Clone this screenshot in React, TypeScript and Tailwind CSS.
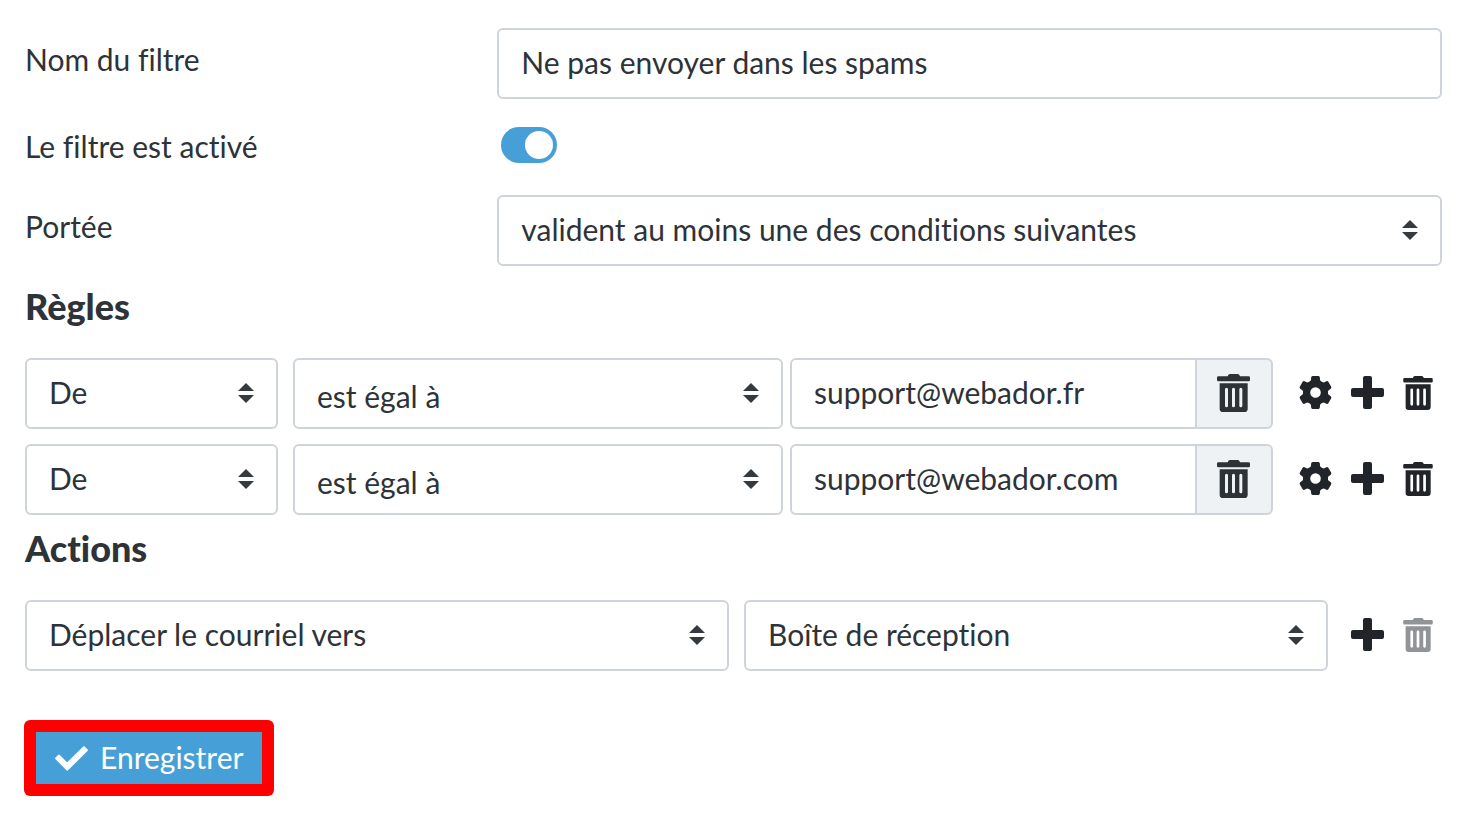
import { useState } from 'react';
import type { ReactNode, SelectHTMLAttributes } from 'react';
import clsx from 'clsx';

const rules = [
  { id: 1, value: 'support@webador.fr' },
  { id: 2, value: 'support@webador.com' },
];

const fieldClass =
  'h-[71px] w-full min-w-0 appearance-none border-2 border-[#ced4da] bg-white px-[22px] pb-[3px] outline-none focus:border-[#469fd6]';

function TrashIcon({ className }: { className?: string }) {
  return (
    <svg viewBox="0 0 99 114" fill="currentColor" className={className} aria-hidden="true">
      <path d="M4 7h28q2-7 7-7h23q5 0 7 7h26q4 0 4 4v7q0 4-4 4H4q-4 0-4-4v-7q0-4 4-4z" />
      <path
        fillRule="evenodd"
        d="M8 28h84v76q0 10-10 10H18q-10 0-10-10zM24 46v49a4.500 4.500 0 0 0 9 0V46a4.500 4.500 0 0 0-9 0zM45 46v49a4.500 4.500 0 0 0 9 0V46a4.500 4.500 0 0 0-9 0zM67 46v49a4.500 4.500 0 0 0 9 0V46a4.500 4.500 0 0 0-9 0z"
      />
    </svg>
  );
}

function GearIcon() {
  return (
    <svg viewBox="-50 -50 100 100" fill="currentColor" className="size-[33px]" aria-hidden="true">
      <circle r="27" fill="none" stroke="currentColor" strokeWidth="22" />
      {[0, 60, 120, 180, 240, 300].map((angle) => (
        <path
          key={angle}
          transform={`rotate(${angle})`}
          d="M-19-30l5-7 1-9q1-4 5-4H8q4 0 5 4l1 9 5 7z"
        />
      ))}
    </svg>
  );
}

function PlusIcon() {
  return (
    <svg viewBox="0 0 99 99" fill="currentColor" className="size-[33px]" aria-hidden="true">
      <rect x="36" width="27" height="99" rx="6" />
      <rect y="36" width="99" height="27" rx="6" />
    </svg>
  );
}

function CheckIcon() {
  return (
    <svg viewBox="0 0 100 75" className="h-[25px] w-[33px]" aria-hidden="true">
      <path
        d="M4 37l8-8 25 25 51-50 8 8-59 59z"
        fill="currentColor"
        stroke="currentColor"
        strokeWidth="7"
        strokeLinejoin="round"
      />
    </svg>
  );
}

type SelectProps = SelectHTMLAttributes<HTMLSelectElement> & {
  options: string[];
  wrapperClassName?: string;
};

function Select({ options, wrapperClassName, className, ...props }: SelectProps) {
  return (
    <div className={clsx('relative min-w-0', wrapperClassName)}>
      <select className={clsx(fieldClass, 'rounded-md pr-14', className)} {...props}>
        {options.map((option) => (
          <option key={option}>{option}</option>
        ))}
      </select>
      <svg
        viewBox="0 0 16 20"
        fill="#343a40"
        className="pointer-events-none absolute top-0 right-6 bottom-0.5 my-auto h-5 w-4"
        aria-hidden="true"
      >
        <path d="M8 0l8 8H0zM0 12h16l-8 8z" />
      </svg>
    </div>
  );
}

function IconButton({
  label,
  disabled,
  children,
}: {
  label: string;
  disabled?: boolean;
  children: ReactNode;
}) {
  return (
    <button
      type="button"
      aria-label={label}
      disabled={disabled}
      className="shrink-0 cursor-pointer text-[#212529] disabled:cursor-default disabled:text-[#909497]"
    >
      {children}
    </button>
  );
}

function RuleRow({ value }: { value: string }) {
  return (
    <div className="flex items-center">
      <Select aria-label="Champ" options={['De']} wrapperClassName="flex-[253_1_0px]" />
      <Select
        aria-label="Condition"
        options={['est égal à']}
        wrapperClassName="ml-[15px] flex-[490_1_0px]"
        className="pt-2"
      />
      <div className="ml-[7px] flex min-w-0 flex-[483_1_0px]">
        <input
          type="text"
          aria-label="Valeur"
          defaultValue={value}
          className={clsx(fieldClass, 'flex-1 rounded-l-md border-r-0')}
        />
        <button
          type="button"
          aria-label="Effacer la valeur"
          className="flex w-[78px] shrink-0 cursor-pointer items-center justify-center rounded-r-md border-2 border-[#ced4da] bg-[#eef2f4] pr-0.5 pb-0.5 text-[#2d3236]"
        >
          <TrashIcon className="h-[38px] w-[33px]" />
        </button>
      </div>
      <div className="ml-[26px] flex items-center gap-[19px] pr-[9px] pb-0.5">
        <IconButton label="Options">
          <GearIcon />
        </IconButton>
        <IconButton label="Ajouter une règle">
          <PlusIcon />
        </IconButton>
        <IconButton label="Supprimer la règle">
          <TrashIcon className="h-[34px] w-[30px]" />
        </IconButton>
      </div>
    </div>
  );
}

export default function App() {
  const [enabled, setEnabled] = useState(true);

  return (
    <form
      onSubmit={(e) => e.preventDefault()}
      className="min-h-screen bg-white pt-7 pr-[30px] pb-6 pl-[25px] font-[Lato,sans-serif] text-[30px] leading-9 text-[#2d3338] [font-variant-ligatures:none]"
    >
      <div className="grid grid-cols-3">
        <label htmlFor="filter-name" className="pt-[13px]">
          Nom du filtre
        </label>
        <input
          id="filter-name"
          type="text"
          defaultValue="Ne pas envoyer dans les spams"
          className={clsx(fieldClass, 'col-span-2 rounded-md')}
        />
      </div>

      <div className="mt-7 grid grid-cols-3">
        <label htmlFor="filter-enabled" className="pt-px">
          Le filtre est activé
        </label>
        <div className="relative col-span-2 ml-1 h-9 w-14">
          <input
            id="filter-enabled"
            type="checkbox"
            role="switch"
            checked={enabled}
            onChange={(e) => setEnabled(e.target.checked)}
            className="peer block h-9 w-14 cursor-pointer appearance-none rounded-full bg-[#adb5bd] checked:bg-[#469fd6]"
          />
          <span className="pointer-events-none absolute top-1 left-1 size-7 rounded-full bg-white peer-checked:left-6" />
        </div>
      </div>

      <div className="mt-[31px] grid grid-cols-3">
        <label htmlFor="filter-scope" className="pt-[13px]">
          Portée
        </label>
        <Select
          id="filter-scope"
          options={['valident au moins une des conditions suivantes']}
          wrapperClassName="col-span-2"
        />
      </div>

      <h2 className="mt-5 text-[36px] leading-10 font-black">Règles</h2>
      <div className="mt-8 flex flex-col gap-[15px]">
        {rules.map((rule) => (
          <RuleRow key={rule.id} value={rule.value} />
        ))}
      </div>

      <h2 className="mt-[13px] text-[36px] leading-10 font-black">Actions</h2>
      <div className="mt-8 flex items-center">
        <Select
          aria-label="Action"
          options={['Déplacer le courriel vers']}
          wrapperClassName="flex-[704_1_0px]"
        />
        <Select
          aria-label="Dossier"
          options={['Boîte de réception']}
          wrapperClassName="ml-[15px] flex-[584_1_0px]"
        />
        <div className="ml-[23px] flex items-center gap-[19px] pr-[9px] pb-0.5">
          <IconButton label="Ajouter une action">
            <PlusIcon />
          </IconButton>
          <IconButton label="Supprimer l'action" disabled>
            <TrashIcon className="h-[34px] w-[30px]" />
          </IconButton>
        </div>
      </div>

      <div className="mt-[49px] -ml-px inline-block rounded-md bg-[#ff0000] p-3">
        <button
          type="submit"
          className="flex h-[52px] cursor-pointer items-center gap-3 bg-[#469fd6] px-[19px] text-white"
        >
          <CheckIcon />
          <span className="pb-[3px]">Enregistrer</span>
        </button>
      </div>
    </form>
  );
}
